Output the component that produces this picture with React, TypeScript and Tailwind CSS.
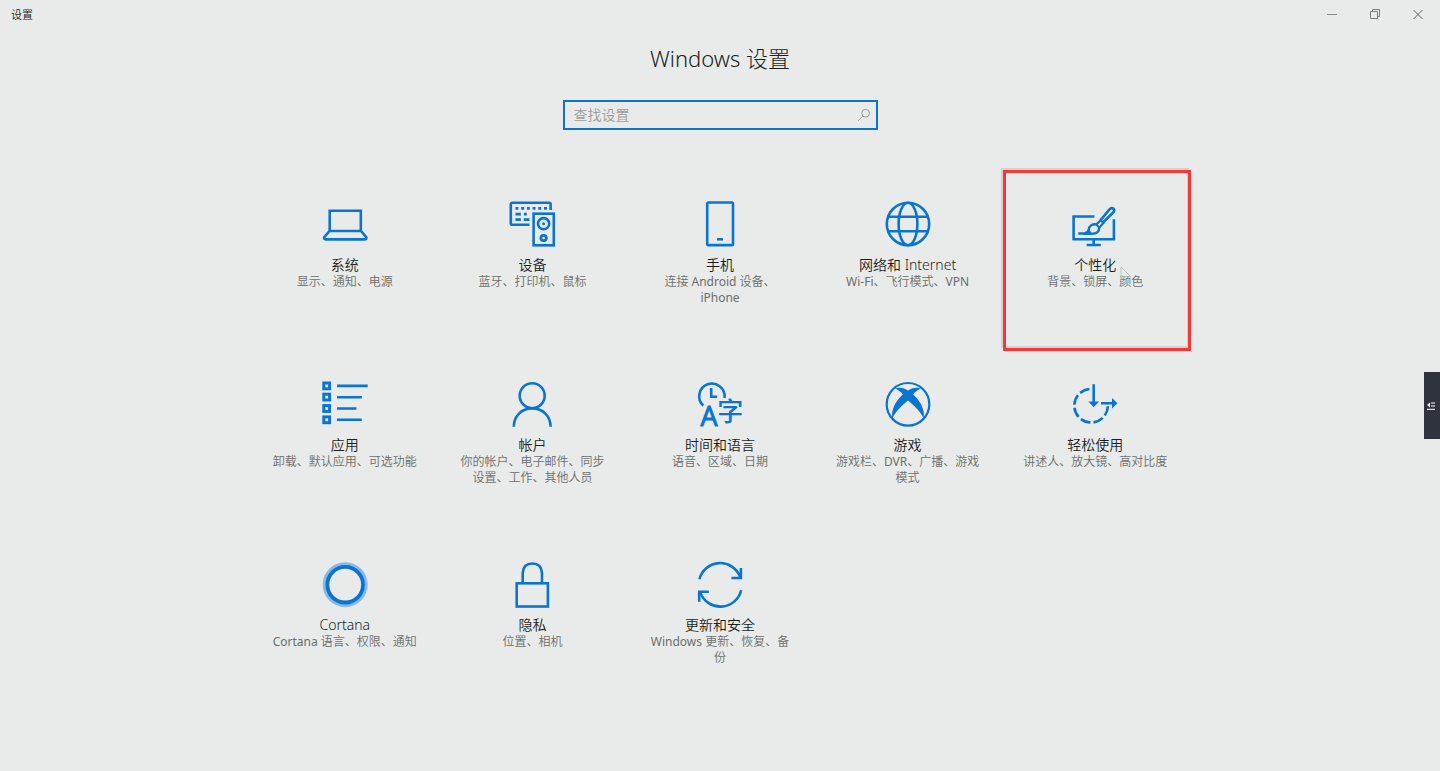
import React from 'react';

const Icon = ({ children }: { children: React.ReactNode }) => (
  <svg
    viewBox="0 0 48 48"
    className="size-12 shrink-0 overflow-visible text-[#0a74d0]"
    fill="none"
    stroke="currentColor"
    strokeWidth="2.6"
    aria-hidden="true"
  >
    {children}
  </svg>
);

const SystemIcon = () => (
  <Icon>
    <path d="M8.7 31V10.8H39.8V31" />
    <path d="M8.5 31H40L45.2 37.2Q46 39.4 43.8 39.4H4.7Q2.5 39.4 3.3 37.2Z" strokeLinejoin="round" />
  </Icon>
);

const DevicesIcon = () => (
  <Icon>
    <path d="M42.6 10V4.2Q42.6 2.7 41.1 2.7H4.3Q2.8 2.7 2.8 4.2V23.3Q2.8 24.8 4.3 24.8H21.5" />
    <path d="M7.5 8.4H39" strokeDasharray="2.9 2.8" strokeWidth="2.8" />
    <path d="M7.5 14.1H12.9M15.9 14.1H18.8M7.5 19.7H12.9M15.8 19.7H21.4" strokeWidth="2.8" />
    <rect x="25.6" y="13.7" width="20.2" height="31.6" />
    <circle cx="35.6" cy="23.7" r="5.6" />
    <circle cx="35.6" cy="23.7" r="1.5" fill="currentColor" stroke="none" />
    <circle cx="35.6" cy="38" r="2.7" strokeWidth="2.8" />
  </Icon>
);

const PhoneIcon = () => (
  <Icon>
    <rect x="11.2" y="2.5" width="25.8" height="42.6" rx="1.2" />
    <path d="M21 39.3H27" />
  </Icon>
);

const NetworkIcon = () => (
  <Icon>
    <circle cx="24" cy="24" r="21.2" />
    <ellipse cx="24" cy="24" rx="9.4" ry="21.2" />
    <path d="M4.1 16.7H43.9M4.1 31.2H43.9" />
  </Icon>
);

const PersonalizeIcon = () => (
  <Icon>
    <path d="M23.4 16.5H2.6V39.3H42.9V19.2M22.7 39.3V44.6M15.7 45H29.8" />
    <path d="M29.4 20.4 38.7 9.1Q40.8 7.2 42.6 8.8Q44 10.6 42.2 12.5L31.7 22.8" />
    <path d="M29.6 20.2 25.4 24.4 28.2 27.7 32.4 23.1Z" strokeWidth="2.2" />
    <path
      d="M25.4 24.4C21 23.8 18.2 26 17.9 29.2C17.6 31.6 16.2 32.8 13.7 33.5H7.2M28.2 27.7C28.4 31.5 25.5 34 20.5 33.8L12 33.7"
      strokeWidth="2.4"
    />
    <path d="M17.9 29.2 16 33.3H20Z" fill="currentColor" strokeWidth="1" />
  </Icon>
);

const AppsIcon = () => (
  <Icon>
    <g strokeWidth="3">
      <rect x="2.8" y="3" width="5.8" height="5.8" />
      <rect x="2.8" y="14.2" width="5.8" height="5.8" />
      <rect x="2.8" y="25.6" width="5.8" height="5.8" />
      <rect x="2.8" y="36.9" width="5.8" height="5.8" />
    </g>
    <path d="M16 5.9H46.7M16 17.2H40.8M16 28.5H35.4M16 39.8H40.8" />
  </Icon>
);

const AccountIcon = () => (
  <Icon>
    <circle cx="24.2" cy="15.7" r="12.5" />
    <path d="M5.8 46.8C5.8 36 13.5 28.4 24.2 28.4S42.6 36 42.6 46.8" />
  </Icon>
);

const TimeLanguageIcon = () => (
  <Icon>
    <path d="M7.3 25.6A12.7 12.7 0 1 1 28.5 18" />
    <path d="M15.2 8V16.7H21.2" />
    <g fill="currentColor" strokeWidth="0">
      <text x="13" y="46.4" fontSize="27" fontWeight="400" strokeWidth="0.9" textAnchor="middle" fontFamily="'Open Sans', sans-serif">A</text>
      <text x="34.2" y="41.4" fontSize="26" fontWeight="500" textAnchor="middle" fontFamily="'Noto Sans CJK SC', sans-serif">字</text>
    </g>
  </Icon>
);

const GamingIcon = () => (
  <Icon>
    <circle cx="24" cy="24.3" r="21.3" strokeWidth="2.2" />
    <path
      d="M11 8.2C16 6.8 21 8.4 24 10.4C27 8.4 32 6.8 37 8.2C34 9.6 31 11.8 29.2 14.4C35.5 20 41.3 29 39.6 38C36.5 31.5 29.5 24.8 24 20.4C18.5 24.8 11.5 31.5 8.4 38C6.7 29 12.5 20 18.8 14.4C17 11.8 14 9.6 11 8.2Z"
      fill="currentColor"
      stroke="none"
    />
  </Icon>
);

const EaseIcon = () => (
  <Icon>
    <path d="M18.4 9A16.8 16.8 0 1 0 36.9 26.3" strokeDasharray="10.2 3.1" />
    <path d="M22.7 4.3V23M30 23.2H43" />
    <path d="M17.3 21.4H28.1L22.7 27.3ZM41 17.9V28.5L46.4 23.2Z" fill="currentColor" stroke="none" />
  </Icon>
);

const CortanaIcon = () => (
  <Icon>
    <circle cx="24.2" cy="24.7" r="20.9" strokeWidth="3.2" stroke="#8ab9e6" />
    <circle cx="24.2" cy="24.7" r="17.8" strokeWidth="3.8" />
  </Icon>
);

const PrivacyIcon = () => (
  <Icon>
    <rect x="8.7" y="23.3" width="31.2" height="23.2" />
    <path d="M14.7 23V13Q15.2 3.5 24.3 3.5T34 13V23" />
  </Icon>
);

const UpdateIcon = () => (
  <Icon>
    <path d="M3.4 19.2A21.4 21.4 0 0 1 44.2 17M45.2 30.2A21.4 21.4 0 0 1 4.3 32.6" />
    <path d="M44.9 8V18H35.4M3.2 41.7V31.8H12.8" />
  </Icon>
);

const CATEGORIES = [
  { title: '系统', detail: '显示、通知、电源', icon: SystemIcon },
  { title: '设备', detail: '蓝牙、打印机、鼠标', icon: DevicesIcon },
  { title: '手机', detail: '连接 Android 设备、iPhone', icon: PhoneIcon },
  { title: '网络和 Internet', detail: 'Wi-Fi、飞行模式、VPN', icon: NetworkIcon },
  { title: '个性化', detail: '背景、锁屏、颜色', icon: PersonalizeIcon, highlighted: true },
  { title: '应用', detail: '卸载、默认应用、可选功能', icon: AppsIcon },
  { title: '帐户', detail: '你的帐户、电子邮件、同步设置、工作、其他人员', icon: AccountIcon },
  { title: '时间和语言', detail: '语音、区域、日期', icon: TimeLanguageIcon },
  { title: '游戏', detail: '游戏栏、DVR、广播、游戏模式', icon: GamingIcon },
  { title: '轻松使用', detail: '讲述人、放大镜、高对比度', icon: EaseIcon },
  { title: 'Cortana', detail: 'Cortana 语言、权限、通知', icon: CortanaIcon },
  { title: '隐私', detail: '位置、相机', icon: PrivacyIcon },
  { title: '更新和安全', detail: 'Windows 更新、恢复、备份', icon: UpdateIcon },
];

const WindowButton = ({ label, children }: { label: string; children: React.ReactNode }) => (
  <button type="button" aria-label={label} className="flex w-[43px] items-center justify-center text-[#5c5d5d]">
    <svg viewBox="0 0 12 12" className="size-3" fill="none" stroke="currentColor" aria-hidden="true">
      {children}
    </svg>
  </button>
);

export default function App() {
  return (
    <div
      lang="zh-CN"
      className="min-h-screen bg-[#e8ebe9] font-['Noto_Sans','Noto_Sans_CJK_SC',sans-serif] text-[#1c1d1d]"
    >
      <header className="flex h-7 justify-between pr-px">
        <span className="pl-[11px] text-[11px] leading-[29px] font-[350]">设置</span>
        <div className="flex">
          <WindowButton label="最小化">
            <path d="M1 6.5H11" stroke="#8b8d8c" />
          </WindowButton>
          <WindowButton label="还原">
            <path d="M1.5 3.5H8.5V10.5H1.5ZM3.5 3.5V1.5H10.5V8.5H8.5" stroke="#7b7d7c" />
          </WindowButton>
          <WindowButton label="关闭">
            <path d="M1.5 2 10.5 11M10.5 2 1.5 11" />
          </WindowButton>
        </div>
      </header>

      <main className="flex flex-col items-center">
        <h1 className="pt-3.5 text-[22px] leading-8 font-light">Windows 设置</h1>

        <label className="mt-[26px] flex h-[30px] w-[315px] items-center border-2 border-[#0f72cc] px-[9px]">
          <input
            type="text"
            aria-label="查找设置"
            placeholder="查找设置"
            className="min-w-0 flex-1 bg-transparent text-sm font-[350] outline-none placeholder:text-[#9b9d9c]"
          />
          <svg viewBox="0 0 14 14" className="-mr-1 size-3.5" fill="none" stroke="#999b9a" aria-hidden="true">
            <circle cx="8.6" cy="5.2" r="3.9" />
            <path d="M5.8 8.1 1.2 12.7" />
          </svg>
        </label>

        <nav aria-label="设置类别" className="mt-[38px] grid w-full max-w-[938px] auto-rows-[180px] grid-cols-5">
          {CATEGORIES.map(({ title, detail, icon: CategoryIcon, highlighted }) => (
            <a
              key={title}
              href="#"
              className={`relative flex flex-col items-center px-5 pt-8 text-center ${
                highlighted ? 'outline-2 -outline-offset-2 outline-[#d0d3d1]' : ''
              }`}
            >
              <CategoryIcon />
              <span className="mt-2 text-sm leading-[18px] font-[350]">{title}</span>
              <span className="font-['Noto_Sans','Noto_Sans_CJK_SC_DemiLight','Noto_Sans_CJK_SC',sans-serif] text-xs leading-4 font-normal text-[#6c6e6d]">
                {detail}
              </span>
              {highlighted && (
                <>
                  <span className="absolute top-0.5 -right-0.5 -bottom-[3px] left-0.5 border-3 border-[#fb3535]" />
                  <svg
                    viewBox="0 0 12 18"
                    className="absolute top-[98px] left-[119px] h-[18px] w-3"
                    fill="#edefee"
                    fillOpacity="0.5"
                    stroke="#b5b7b6"
                    strokeWidth="0.8"
                    aria-hidden="true"
                  >
                    <path d="M1 1V13.5L4 10.5H10.5Z" />
                  </svg>
                </>
              )}
            </a>
          ))}
        </nav>
      </main>

      <button
        type="button"
        aria-label="展开侧栏"
        className="fixed top-[372px] right-0 flex h-[67px] w-4 items-center justify-center bg-[#2f333e] text-white"
      >
        <svg viewBox="0 0 8 8" className="mr-0.5 size-2" fill="none" stroke="currentColor" aria-hidden="true">
          <path d="M4 1H8M4 4H8M0 7.3H8" />
          <path d="M3 0.5 0 3 3 5.5Z" fill="currentColor" stroke="none" />
        </svg>
      </button>
    </div>
  );
}
